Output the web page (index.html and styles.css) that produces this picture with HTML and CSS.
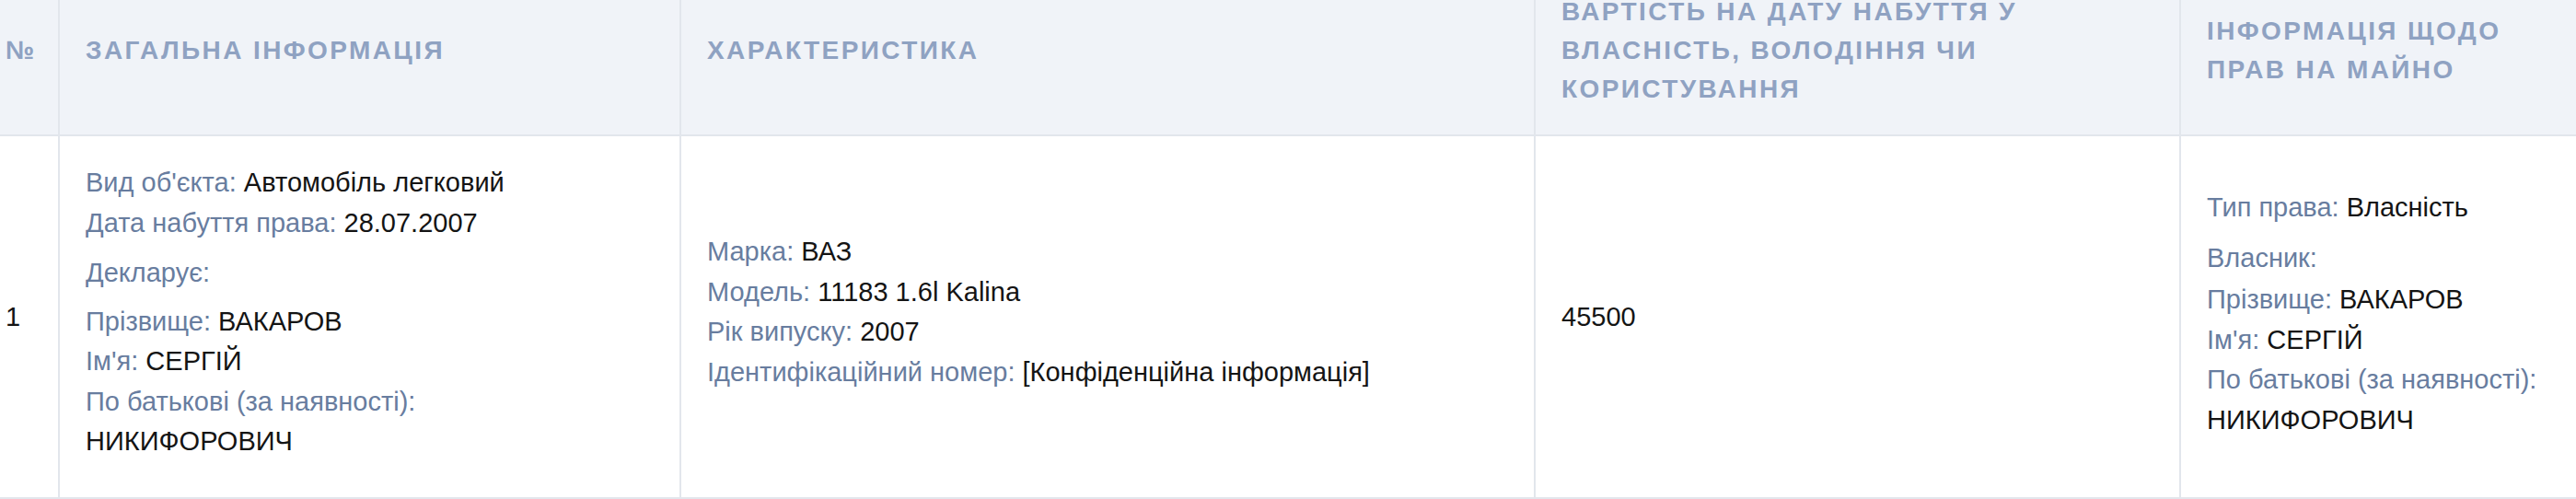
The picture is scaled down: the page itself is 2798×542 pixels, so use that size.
FILE: index.html
```html
<!DOCTYPE html>
<html lang="uk">
<head>
<meta charset="utf-8">
<title>Транспортні засоби</title>
<link rel="stylesheet" href="styles.css">
</head>
<body>
<div class="scroller">
<table class="decl">
  <colgroup>
    <col class="c-num">
    <col class="c-gen">
    <col class="c-char">
    <col class="c-cost">
    <col class="c-rights">
  </colgroup>
  <thead>
    <tr>
      <th class="num">№</th>
      <th>Загальна інформація</th>
      <th>Характеристика</th>
      <th>Вартість на дату набуття у власність, володіння чи користування</th>
      <th>Інформація щодо прав на майно</th>
    </tr>
  </thead>
  <tbody>
    <tr>
      <td class="num">1</td>
      <td>
        <div class="grp">
          <div><span class="lbl">Вид об'єкта:</span> Автомобіль легковий</div>
          <div><span class="lbl">Дата набуття права:</span> 28.07.2007</div>
        </div>
        <div class="grp grp-mid">
          <div><span class="lbl">Декларує:</span></div>
        </div>
        <div class="grp">
          <div><span class="lbl">Прізвище:</span> ВАКАРОВ</div>
          <div><span class="lbl">Ім'я:</span> СЕРГІЙ</div>
          <div><span class="lbl">По батькові (за наявності):</span></div>
          <div>НИКИФОРОВИЧ</div>
        </div>
      </td>
      <td>
        <div class="grp">
          <div><span class="lbl">Марка:</span> ВАЗ</div>
          <div><span class="lbl">Модель:</span> 11183 1.6l Kalina</div>
          <div><span class="lbl">Рік випуску:</span> 2007</div>
          <div><span class="lbl">Ідентифікаційний номер:</span> [Конфіденційна інформація]</div>
        </div>
      </td>
      <td>45500</td>
      <td>
        <div class="grp grp-first">
          <div><span class="lbl">Тип права:</span> Власність</div>
        </div>
        <div class="grp grp-tight">
          <div><span class="lbl">Власник:</span></div>
        </div>
        <div class="grp">
          <div><span class="lbl">Прізвище:</span> ВАКАРОВ</div>
          <div><span class="lbl">Ім'я:</span> СЕРГІЙ</div>
          <div><span class="lbl">По батькові (за наявності):</span></div>
          <div>НИКИФОРОВИЧ</div>
        </div>
      </td>
    </tr>
  </tbody>
</table>
</div>
</body>
</html>
```
FILE: styles.css
```css
html, body {
  margin: 0;
  padding: 0;
  background: #ffffff;
  overflow: hidden;
}

.scroller {
  margin-top: -36px;
}

.decl {
  width: 100%;
  border-collapse: collapse;
  table-layout: fixed;
  font-family: "Liberation Sans", Arial, Helvetica, sans-serif;
  color: #141414;
}

.c-num { width: 64px; }
.c-gen { width: 675px; }
.c-char { width: 928px; }
.c-cost { width: 701px; }

.decl th {
  background: #f0f3f8;
  color: #8fa2c2;
  font-size: 28px;
  font-weight: bold;
  line-height: 42px;
  letter-spacing: 2.4px;
  text-transform: uppercase;
  text-align: left;
  vertical-align: middle;
  padding: 28px 28px;
  border-left: 2px solid #e2e6ec;
  border-bottom: 2px solid #e2e6ec;
}

.decl td {
  font-size: 29px;
  line-height: 43.5px;
  text-align: left;
  vertical-align: middle;
  padding: 29px 28px 27px;
  border-left: 2px solid #e2e6ec;
  border-bottom: 2px solid #e2e6ec;
}

.decl th:first-child,
.decl td:first-child {
  border-left: none;
}

.decl th.num,
.decl td.num {
  padding-left: 6px;
  padding-right: 0;
  letter-spacing: 0;
}

.grp {
  margin-bottom: 11px;
}

.grp-first {
  margin-top: 4px;
}

.grp-mid {
  margin-bottom: 9px;
}

.grp-tight {
  margin-bottom: 2px;
}

.lbl {
  color: #687d9f;
}
```
